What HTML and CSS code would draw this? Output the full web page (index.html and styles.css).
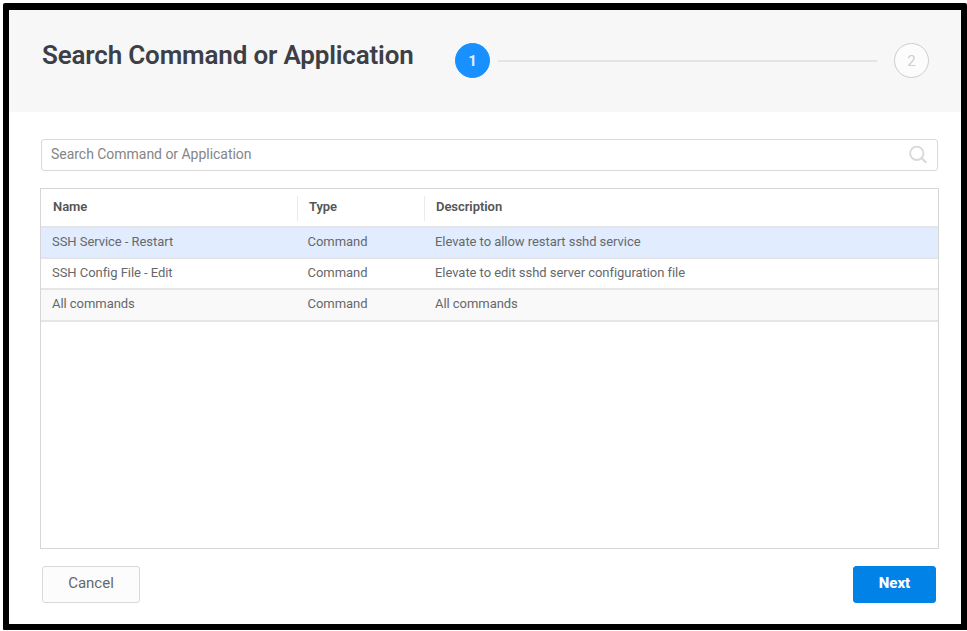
FILE: index.html
```html
<!DOCTYPE html>
<html lang="en">
<head>
<meta charset="utf-8">
<title>Search Command or Application</title>
<link rel="stylesheet" href="styles.css">
</head>
<body>
<main class="dialog">
  <header class="header">
    <h1 class="title">Search Command or Application</h1>
    <div class="steps">
      <span class="step step-active">1</span>
      <span class="step-line"></span>
      <span class="step">2</span>
    </div>
  </header>
  <div class="search">
    <input class="search-input" type="text" placeholder="Search Command or Application" aria-label="Search Command or Application">
    <svg class="search-icon" width="20" height="20" viewBox="0 0 20 20" fill="none" stroke="#d9d9d9" stroke-width="1.9">
      <circle cx="8.8" cy="8.3" r="6.7"/>
      <path d="M13.5 13L18.2 17.6" stroke-width="2.2"/>
    </svg>
  </div>
  <section class="table">
    <div class="row head"><span class="cell">Name</span><span class="cell">Type</span><span class="cell">Description</span></div>
    <div class="row selected"><span class="cell">SSH Service - Restart</span><span class="cell">Command</span><span class="cell">Elevate to allow restart sshd service</span></div>
    <div class="row"><span class="cell">SSH Config File - Edit</span><span class="cell">Command</span><span class="cell">Elevate to edit sshd server configuration file</span></div>
    <div class="row alt"><span class="cell">All commands</span><span class="cell">Command</span><span class="cell">All commands</span></div>
  </section>
  <footer class="footer">
    <button class="button">Cancel</button>
    <button class="button primary">Next</button>
  </footer>
</main>
</body>
</html>
```
FILE: styles.css
```css
* { box-sizing: border-box; }
body {
  margin: 0;
  background: #fff;
  font-family: Roboto, sans-serif;
  overflow: hidden;
}
.dialog {
  width: 964px;
  height: 627px;
  margin: 3px 0 0 3px;
  border: 6px solid #000;
  border-top-width: 7px;
  border-radius: 2px 2px 0 1px;
  background: #fff;
}
.header {
  display: flex;
  align-items: flex-start;
  height: 102px;
  padding: 0 33px;
  background: #f7f7f7;
}
.title {
  flex: none;
  width: 413px;
  margin: 30px 0 0;
  color: #3d3f47;
  font-size: 26px;
  line-height: 30px;
  font-weight: 600;
  letter-spacing: -0.17px;
  white-space: nowrap;
}
.steps {
  flex: 1;
  display: flex;
  align-items: center;
  padding-top: 33px;
}
.step {
  display: flex;
  align-items: center;
  justify-content: center;
  width: 35px;
  height: 35px;
  margin-right: -1px;
  border: 1.5px solid #cdcdcd;
  border-radius: 50%;
  background: #fcfcfc;
  color: #cfcfcf;
  font-size: 15px;
}
.step-active {
  margin: 0;
  border-color: #1890ff;
  background: #1890ff;
  color: #e3f1ff;
  font-weight: 700;
}
.step-line {
  flex: 1;
  height: 2px;
  margin: 0 17px 0 8px;
  background: #e4e4e4;
}
.search {
  display: flex;
  align-items: center;
  width: 897px;
  height: 32px;
  margin: 27px 0 0 32px;
  padding: 0 9px;
  border: 1px solid #d9d9d9;
  border-radius: 3px;
}
.search-input {
  flex: 1;
  padding: 0 0 2px;
  border: 0;
  outline: 0;
  background: none;
  font: 14px/20px Roboto, sans-serif;
  letter-spacing: -0.03px;
}
.search-input::placeholder { color: #858585; }
.table {
  width: 899px;
  height: 361px;
  margin: 17px 0 0 31px;
  border: 1px solid #d6d6d6;
}
.row {
  display: grid;
  grid-template-columns: 256px 127px 1fr;
  height: 31px;
  border-bottom: 2px solid #e5e5e8;
  color: #66686c;
  font-size: 13px;
  line-height: 28px;
  letter-spacing: -0.05px;
}
.cell { padding-left: 11px; }
.cell:nth-child(2) { padding-left: 10.5px; }
.head {
  height: 39px;
  color: #555;
  font-weight: 600;
  line-height: 35px;
}
.head .cell { padding-left: 12px; }
.head .cell + .cell {
  height: 25px;
  margin-top: 7px;
  padding-left: 11px;
  border-left: 1px solid #ebebeb;
  line-height: 21px;
}
.selected { background: #e1edff; }
.alt { height: 32px; background: #f9f9f9; }
.footer {
  display: flex;
  justify-content: space-between;
  width: 894px;
  margin: 17px 0 0 33px;
}
.button {
  width: 98px;
  height: 37px;
  padding: 0 0 3px;
  border: 1px solid #d9d9d9;
  border-radius: 3px;
  background: #fcfcfc;
  color: #66686c;
  font: 15px/20px Roboto, sans-serif;
}
.primary {
  width: 83px;
  border-color: #0082e6;
  background: #0082e6;
  color: #fff;
  font-weight: 800;
}
```
